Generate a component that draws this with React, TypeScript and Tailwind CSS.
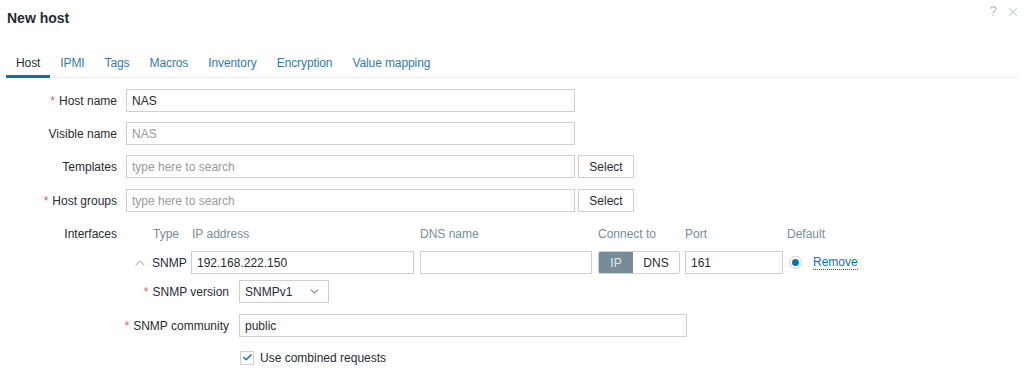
import { Check, ChevronDown, ChevronUp, X } from 'lucide-react';

const tabs = ['Host', 'IPMI', 'Tags', 'Macros', 'Inventory', 'Encryption', 'Value mapping'];

const inputCls =
  'h-[23px] border border-[#cfcfcf] bg-white px-[5px] text-[12px] text-[#1f2c33] flex items-center';

function Req() {
  return <span className="text-[#e45959] mr-[4px]">*</span>;
}

function Row({
  label,
  required,
  children,
  className = '',
}: {
  label: string;
  required?: boolean;
  children: React.ReactNode;
  className?: string;
}) {
  return (
    <div className={`flex items-center h-[23px] ${className}`}>
      <div className="w-[117px] text-right text-[#1f2c33] whitespace-nowrap">
        {required && <Req />}
        {label}
      </div>
      <div className="ml-[9px] flex items-center gap-[3px]">{children}</div>
    </div>
  );
}

function SelectBtn() {
  return (
    <div className="h-[23px] w-[56px] border border-[#cfcfcf] bg-white flex items-center justify-center text-[#1f2c33]">
      Select
    </div>
  );
}

export default function App() {
  return (
    <div
      className="w-[1024px] h-[375px] bg-white overflow-hidden text-[12px] text-[#1f2c33]"
      style={{ fontFamily: '"Liberation Sans", Arial, sans-serif' }}
    >
      {/* header */}
      <div className="flex justify-between items-start h-[36px]">
        <h1 className="pl-[7px] pt-[9px] text-[14px] font-bold leading-[18px] text-[#1f2c33]">New host</h1>
        <div className="flex items-center gap-[9px] pr-[4px] pt-[1px] text-[#b9c1c6]">
          <span className="text-[14px]">?</span>
          <X size={14} strokeWidth={1.8} />
        </div>
      </div>

      {/* tabs */}
      <div className="mx-[6px] h-[42px] flex items-end border-b border-[#ebeef0]">
        {tabs.map((t, i) => (
          <div
            key={t}
            className={`px-[10px] h-[22px] leading-[14px] -mb-px tracking-[-0.1px] ${
              i === 0
                ? 'text-[#1f2c33] border-b-[3px] border-[#0275b8]'
                : 'text-[#2f7bb0] border-b-[3px] border-transparent'
            }`}
          >
            {t}
          </div>
        ))}
      </div>

      {/* form */}
      <div className="mt-[11px] flex flex-col">
        <Row label="Host name" required>
          <div className={`${inputCls} w-[449px]`}>NAS</div>
        </Row>
        <Row label="Visible name" className="mt-[10px]">
          <div className={`${inputCls} w-[449px] text-[#9a9a9a]`}>NAS</div>
        </Row>
        <Row label="Templates" className="mt-[10px]">
          <div className={`${inputCls} w-[449px] text-[#9a9a9a]`}>type here to search</div>
          <SelectBtn />
        </Row>
        <Row label="Host groups" required className="mt-[11px]">
          <div className={`${inputCls} w-[449px] text-[#9a9a9a]`}>type here to search</div>
          <SelectBtn />
        </Row>

        {/* interfaces header */}
        <div className="flex items-center mt-[15px] h-[14px]">
          <div className="w-[117px] text-right">Interfaces</div>
          <div className="ml-[9px] flex text-[#768d99]">
            <div className="w-[65px] pl-[27px]">Type</div>
            <div className="w-[229px] pl-[1px]">IP address</div>
            <div className="w-[178px]">DNS name</div>
            <div className="w-[86px]">Connect to</div>
            <div className="w-[103px] pl-[1px]">Port</div>
            <div>Default</div>
          </div>
        </div>

        {/* snmp interface row */}
        <div className="flex items-center mt-[10px] h-[23px]">
          <div className="w-[126px]" />
          <div className="w-[65px] flex items-center pl-[6px] text-[#1f2c33]">
            <ChevronUp size={16} strokeWidth={1.6} className="text-[#b5bec4]" />
            <span className="ml-[4px]">SNMP</span>
          </div>
          <div className={`${inputCls} w-[223px]`}>192.168.222.150</div>
          <div className={`${inputCls} w-[172px] ml-[6px]`} />
          <div className="ml-[6px] flex h-[23px] border border-[#cfcfcf] rounded-[2px] overflow-hidden">
            <div className="w-[34px] bg-[#768d99] text-[#e2e8eb] flex items-center justify-center">IP</div>
            <div className="w-[46px] bg-white flex items-center justify-center">DNS</div>
          </div>
          <div className={`${inputCls} w-[98px] ml-[5px]`}>161</div>
          <div className="ml-[6px] w-[13px] h-[13px] rounded-full border border-[#cfcfcf] bg-white flex items-center justify-center">
            <div className="w-[7px] h-[7px] rounded-full bg-[#0275b8]" />
          </div>
          <span className="ml-[11px] text-[#0275b8] border-b border-dotted border-[#0275b8] leading-[13px]">
            Remove
          </span>
        </div>

        {/* snmp version */}
        <div className="flex items-center mt-[6px] h-[23px]">
          <div className="w-[229px] text-right">
            <Req />
            SNMP version
          </div>
          <div className={`${inputCls} w-[90px] ml-[10px] justify-between`}>
            <span>SNMPv1</span>
            <ChevronDown size={13} strokeWidth={1.5} className="text-[#1f2c33] mr-[2px]" />
          </div>
        </div>

        {/* snmp community */}
        <div className="flex items-center mt-[11px] h-[23px]">
          <div className="w-[229px] text-right">
            <Req />
            SNMP community
          </div>
          <div className={`${inputCls} w-[448px] ml-[10px] border-[#7896a8]`}>public</div>
        </div>

        {/* combined requests */}
        <div className="flex items-center mt-[13px] h-[15px] ml-[240px]">
          <div className="w-[14px] h-[14px] border border-[#cfcfcf] bg-white flex items-center justify-center">
            <Check size={11} strokeWidth={3} className="text-[#0275b8]" />
          </div>
          <span className="ml-[6px]">Use combined requests</span>
        </div>
      </div>
    </div>
  );
}
